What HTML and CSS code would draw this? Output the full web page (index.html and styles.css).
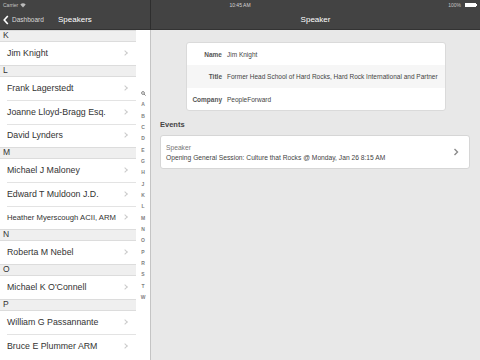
FILE: index.html
```html
<!DOCTYPE html>
<html lang="en">
  <head>
    <meta charset="UTF-8" />
    <title>Speaker</title>
    <link rel="stylesheet" href="styles.css">
  </head>
  <body>
    <div class="status-bar">
      <span class="carrier">Carrier
        <svg width="6" height="5" viewBox="0 0 6 5"><path d="M0.3 1.6 A4 4 0 0 1 5.7 1.6 L3 4.6 Z" fill="#bbb"/></svg>
      </span>
      <span class="clock">10:45 AM</span>
      <span class="battery">100%
        <span class="battery-body"></span><span class="battery-nub"></span>
      </span>
    </div>
    <div class="app">
      <div class="master">
        <div class="navbar">
          <a class="back" href="#">
            <svg width="6" height="10" viewBox="0 0 6 10"><polyline points="4.8,1 1.2,5 4.8,9" fill="none" stroke="#fff" stroke-width="1.6"/></svg>
            Dashboard
          </a>
          <span class="nav-title">Speakers</span>
        </div>
        <div class="master-body">
          <ul class="list">
            <li class="section">K</li>
            <li class="row">Jim Knight<span class="chev"></span></li>
            <li class="section">L</li>
            <li class="row">Frank Lagerstedt<span class="chev"></span></li>
            <li class="row">Joanne Lloyd-Bragg Esq.<span class="chev"></span></li>
            <li class="row">David Lynders<span class="chev"></span></li>
            <li class="section">M</li>
            <li class="row">Michael J Maloney<span class="chev"></span></li>
            <li class="row">Edward T Muldoon J.D.<span class="chev"></span></li>
            <li class="row small">Heather Myerscough ACII, ARM<span class="chev"></span></li>
            <li class="section">N</li>
            <li class="row">Roberta M Nebel<span class="chev"></span></li>
            <li class="section">O</li>
            <li class="row">Michael K O'Connell<span class="chev"></span></li>
            <li class="section">P</li>
            <li class="row">William G Passannante<span class="chev"></span></li>
            <li class="row">Bruce E Plummer ARM<span class="chev"></span></li>
          </ul>
          <div class="index">
            <span><svg width="5" height="5" viewBox="0 0 5 5"><circle cx="2" cy="2" r="1.4" fill="none" stroke="#777" stroke-width="0.9"/><line x1="3" y1="3" x2="4.6" y2="4.6" stroke="#777" stroke-width="0.9"/></svg></span>
            <span>A</span><span>B</span><span>C</span><span>D</span><span>E</span>
            <span>G</span><span>H</span><span>J</span><span>K</span><span>L</span>
            <span>M</span><span>N</span><span>O</span><span>P</span><span>R</span>
            <span>S</span><span>T</span><span>W</span>
          </div>
        </div>
      </div>
      <div class="detail">
        <div class="navbar center">
          <span class="nav-title">Speaker</span>
        </div>
        <div class="detail-body">
          <div class="info-card">
            <div class="info-row"><span class="info-label">Name</span><span class="info-value">Jim Knight</span></div>
            <div class="info-row alt"><span class="info-label">Title</span><span class="info-value">Former Head School of Hard Rocks, Hard Rock International and Partner</span></div>
            <div class="info-row"><span class="info-label">Company</span><span class="info-value">PeopleForward</span></div>
          </div>
          <h2 class="events-title">Events</h2>
          <div class="event-card">
            <div class="event-text">
              <div class="event-role">Speaker</div>
              <div class="event-name">Opening General Session: Culture that Rocks @ Monday, Jan 26 8:15 AM</div>
            </div>
            <svg width="6" height="8" viewBox="0 0 6 8"><polyline points="1.5,1 4.5,4 1.5,7" fill="none" stroke="#8a8a8a" stroke-width="1.4"/></svg>
          </div>
        </div>
      </div>
    </div>
  </body>
</html>
```

FILE: styles.css
```css
body {
  margin: 0;
  font-family: "Liberation Sans", Arial, sans-serif;
  background-color: #e8e8e8;
  width: 480px;
  height: 360px;
  overflow: hidden;
  position: relative;
}
ul {
  list-style: none;
  margin: 0;
  padding: 0;
}

/* status bar sits over the two nav bars */
.status-bar {
  position: absolute;
  top: 0;
  left: 0;
  right: 0;
  height: 10px;
  display: flex;
  justify-content: space-between;
  align-items: center;
  padding: 0 3px;
  font-size: 5px;
  color: #c4c4c4;
  z-index: 2;
}
.carrier,
.battery {
  display: flex;
  align-items: center;
  gap: 2px;
  width: 60px;
}
.battery {
  justify-content: flex-end;
}
.clock {
  color: #d6d6d6;
}
.battery-body {
  width: 11px;
  height: 4px;
  background: #fff;
  margin-left: 2px;
}
.battery-nub {
  width: 1px;
  height: 2px;
  background: #fff;
  margin-left: -2px;
}

.app {
  display: flex;
  height: 360px;
}
.master {
  width: 150px;
  border-right: 1px solid #c4c4c4;
  background: #fff;
  display: flex;
  flex-direction: column;
}
.detail {
  flex: 1;
  display: flex;
  flex-direction: column;
}
.navbar {
  height: 30px;
  box-sizing: border-box;
  padding-top: 10px;
  background-color: #434343;
  border-bottom: 1px solid #333;
  display: flex;
  align-items: center;
  flex-shrink: 0;
}
.master .navbar {
  border-right: 1px solid #2e2e2e;
  margin-right: -1px;
}
.navbar.center {
  justify-content: center;
}
.back {
  display: flex;
  align-items: center;
  gap: 3px;
  padding-left: 3px;
  color: #d8d8d8;
  font-size: 6.5px;
  text-decoration: none;
  width: 55px;
}
.nav-title {
  color: #fff;
  font-size: 8px;
}
.master .nav-title {
  margin-left: 0;
}

.master-body {
  flex: 1;
  display: flex;
  overflow: hidden;
}
.list {
  width: 136px;
}
.section {
  height: 11.5px;
  box-sizing: border-box;
  background: #efefef;
  border-top: 1px solid #dcdcdc;
  border-bottom: 1px solid #dcdcdc;
  padding-left: 3px;
  font-size: 8.5px;
  line-height: 9.5px;
  color: #333;
}
.row {
  height: 23.5px;
  box-sizing: border-box;
  display: flex;
  align-items: center;
  justify-content: space-between;
  padding: 0 9px 0 7px;
  font-size: 8.8px;
  color: #333;
  position: relative;
}
.row + .row::before {
  content: "";
  position: absolute;
  top: 0;
  left: 7px;
  right: 0;
  border-top: 1px solid #e3e3e3;
}
.row.small {
  font-size: 7.7px;
}
.chev {
  width: 3px;
  height: 3px;
  border-top: 1px solid #cacaca;
  border-right: 1px solid #cacaca;
  transform: rotate(45deg);
}
.index {
  width: 14px;
  display: flex;
  flex-direction: column;
  justify-content: center;
  align-items: center;
  font-size: 5px;
  font-weight: bold;
  color: #808080;
}
.index span {
  height: 11.33px;
  display: flex;
  align-items: center;
}

.detail-body {
  padding: 12px 10px 0 9px;
}
.info-card {
  width: 258px;
  margin: 0 auto 0 26px;
  background: #fff;
  border: 1px solid #dadada;
  border-radius: 3px;
  font-size: 6.5px;
  color: #444;
}
.info-row {
  display: flex;
  align-items: center;
  height: 22px;
}
.info-row.alt {
  height: 23px;
  background: #f6f6f6;
}
.info-label {
  width: 35px;
  text-align: right;
  font-weight: bold;
  color: #555;
  margin-right: 5px;
}
.events-title {
  margin: 9px 0 6px 0;
  font-size: 7.5px;
  color: #444;
}
.event-card {
  height: 34px;
  box-sizing: border-box;
  background: #fff;
  border: 1px solid #d6d6d6;
  border-radius: 3px;
  display: flex;
  align-items: center;
  justify-content: space-between;
  padding: 0 10px 0 5px;
  font-size: 6.7px;
}
.event-role {
  color: #777;
  margin-bottom: 3px;
}
.event-name {
  color: #444;
}
```
